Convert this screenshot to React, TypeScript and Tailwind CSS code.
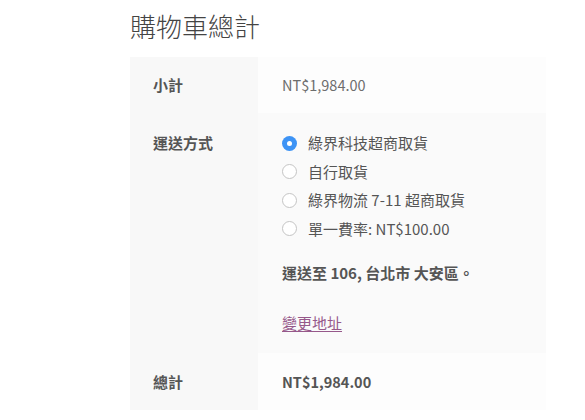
import React from "react";

const font = { fontFamily: '"Noto Sans CJK TC", "Noto Sans", sans-serif' };

function Radio({ checked, label }: { checked?: boolean; label: React.ReactNode }) {
  return (
    <li className="flex items-center h-[28.5px]">
      {checked ? (
        <span className="w-[15px] h-[15px] rounded-full bg-[#3d93f5] flex items-center justify-center mr-[11px] shrink-0">
          <span className="w-[5px] h-[5px] rounded-full bg-white" />
        </span>
      ) : (
        <span className="w-[15px] h-[15px] rounded-full border border-[#c4c4c4] bg-white mr-[11px] shrink-0" />
      )}
      <span className="text-[15px] leading-6 text-[#555]">{label}</span>
    </li>
  );
}

export default function App() {
  return (
    <div className="w-[585px] h-[420px] bg-white overflow-hidden" style={font}>
      <div className="ml-[130px] w-[416px]">
        {/* HEADING */}
        <h2 className="pt-2 mb-[13px] text-[26px] leading-[36px] font-light text-[#444]">
          購物車總計
        </h2>

        {/* TOTALS TABLE */}
        <div className="grid grid-cols-[128px_1fr] text-[15px]">
          <div className="bg-[#f8f8f8] px-[23px] py-4 leading-6 font-semibold text-[#555]">小計</div>
          <div className="bg-[#fdfdfd] px-6 py-4 leading-6 text-[14.5px] text-[#6d6d6d]">NT$1,984.00</div>

          <div className="bg-[#f8f8f8] px-[23px] pt-[18px] leading-6 font-semibold text-[#555]">運送方式</div>
          <div className="bg-[#fafafa] pl-6 pt-4 pb-[18px]">
            <ul>
              <Radio checked label="綠界科技超商取貨" />
              <Radio label="自行取貨" />
              <Radio label="綠界物流 7-11 超商取貨" />
              <Radio label="單一費率: NT$100.00" />
            </ul>
            <p className="mt-[18px] leading-6 text-[#555] font-semibold">
              運送至 <strong className="font-bold">106, 台北市 大安區</strong>。
            </p>
            <p className="mt-[26px] leading-6">
              <a href="#" className="text-[#96588a] underline underline-offset-2">變更地址</a>
            </p>
          </div>

          <div className="bg-[#f8f8f8] px-[23px] pt-[17px] pb-4 leading-6 font-semibold text-[#555]">總計</div>
          <div className="bg-[#fdfdfd] px-6 pt-[17px] pb-4 leading-6 text-[14.5px] font-semibold text-[#555]">NT$1,984.00</div>
        </div>
      </div>
    </div>
  );
}
